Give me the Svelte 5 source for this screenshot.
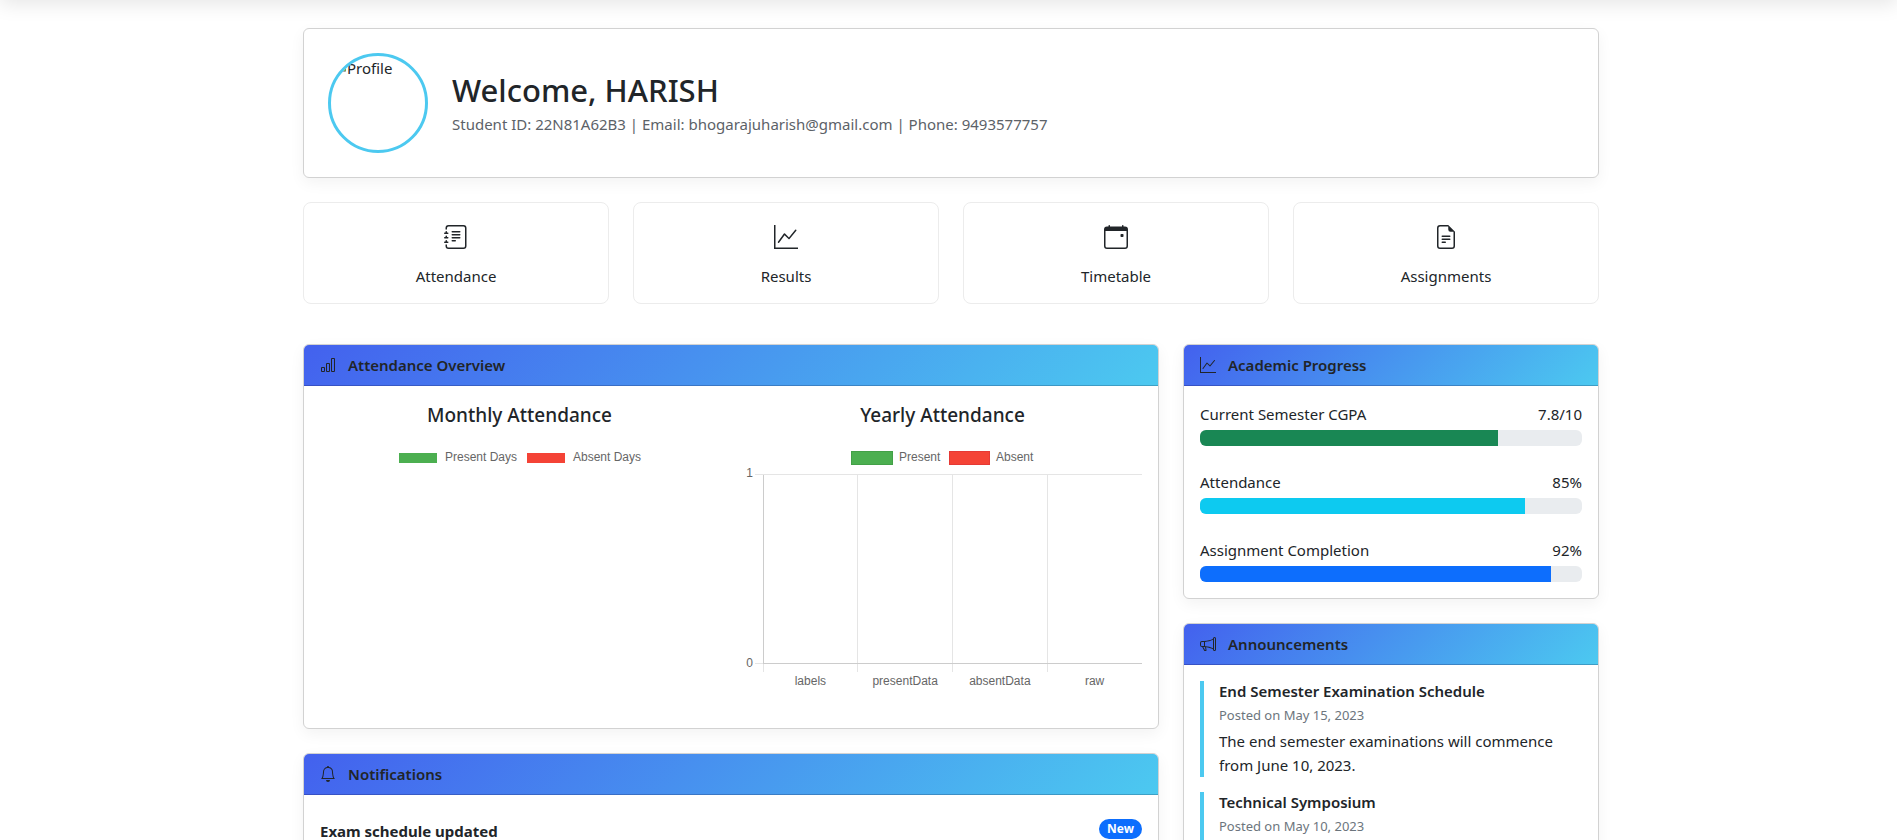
<script>
  const icons = {
    journal: [
      'M5 10.5a.5.5 0 0 1 .5-.5h2a.5.5 0 0 1 0 1h-2a.5.5 0 0 1-.5-.5m0-2a.5.5 0 0 1 .5-.5h5a.5.5 0 0 1 0 1h-5a.5.5 0 0 1-.5-.5m0-2a.5.5 0 0 1 .5-.5h5a.5.5 0 0 1 0 1h-5a.5.5 0 0 1-.5-.5m0-2a.5.5 0 0 1 .5-.5h5a.5.5 0 0 1 0 1h-5a.5.5 0 0 1-.5-.5',
      'M3 0h10a2 2 0 0 1 2 2v12a2 2 0 0 1-2 2H3a2 2 0 0 1-2-2v-1h1v1a1 1 0 0 0 1 1h10a1 1 0 0 0 1-1V2a1 1 0 0 0-1-1H3a1 1 0 0 0-1 1v1H1V2a2 2 0 0 1 2-2',
      'M1 5v-.5a.5.5 0 0 1 1 0V5h.5a.5.5 0 0 1 0 1h-2a.5.5 0 0 1 0-1zm0 3v-.5a.5.5 0 0 1 1 0V8h.5a.5.5 0 0 1 0 1h-2a.5.5 0 0 1 0-1zm0 3v-.5a.5.5 0 0 1 1 0v.5h.5a.5.5 0 0 1 0 1h-2a.5.5 0 0 1 0-1z'
    ],
    graph: [
      'M0 0h1v15h15v1H0zm14.817 3.113a.5.5 0 0 1 .07.704l-4.5 5.5a.5.5 0 0 1-.74.037L7.06 6.767l-3.656 5.027a.5.5 0 0 1-.808-.588l4-5.5a.5.5 0 0 1 .758-.06l2.609 2.61 4.15-5.073a.5.5 0 0 1 .704-.07'
    ],
    calendar: [
      'M11 6.5a.5.5 0 0 1 .5-.5h1a.5.5 0 0 1 .5.5v1a.5.5 0 0 1-.5.5h-1a.5.5 0 0 1-.5-.5z',
      'M3.5 0a.5.5 0 0 1 .5.5V1h8V.5a.5.5 0 0 1 1 0V1h1a2 2 0 0 1 2 2v11a2 2 0 0 1-2 2H2a2 2 0 0 1-2-2V3a2 2 0 0 1 2-2h1V.5a.5.5 0 0 1 .5-.5M1 4v10a1 1 0 0 0 1 1h12a1 1 0 0 0 1-1V4z'
    ],
    file: [
      'M5.5 7a.5.5 0 0 0 0 1h5a.5.5 0 0 0 0-1zM5 9.5a.5.5 0 0 1 .5-.5h5a.5.5 0 0 1 0 1h-5a.5.5 0 0 1-.5-.5m0 2a.5.5 0 0 1 .5-.5h2a.5.5 0 0 1 0 1h-2a.5.5 0 0 1-.5-.5',
      'M9.5 0H4a2 2 0 0 0-2 2v12a2 2 0 0 0 2 2h8a2 2 0 0 0 2-2V4.5zm0 1v2A1.5 1.5 0 0 0 11 4.5h2V14a1 1 0 0 1-1 1H4a1 1 0 0 1-1-1V2a1 1 0 0 1 1-1z'
    ],
    bars: [
      'M4 11H2v3h2zm5-4H7v7h2zm5-5v12h-2V2zm-2-1a1 1 0 0 0-1 1v12a1 1 0 0 0 1 1h2a1 1 0 0 0 1-1V2a1 1 0 0 0-1-1zM6 7a1 1 0 0 1 1-1h2a1 1 0 0 1 1 1v7a1 1 0 0 1-1 1H7a1 1 0 0 1-1-1zm-5 4a1 1 0 0 1 1-1h2a1 1 0 0 1 1 1v3a1 1 0 0 1-1 1H2a1 1 0 0 1-1-1z'
    ],
    bell: [
      'M8 16a2 2 0 0 0 2-2H6a2 2 0 0 0 2 2M8 1.918l-.797.161A4 4 0 0 0 4 6c0 .628-.134 2.197-.459 3.742-.16.767-.376 1.566-.663 2.258h10.244c-.287-.692-.502-1.49-.663-2.258C12.134 8.197 12 6.628 12 6a4 4 0 0 0-3.203-3.92zM14.22 12c.223.447.481.801.78 1H1c.299-.199.557-.553.78-1C2.68 10.2 3 6.88 3 6c0-2.42 1.72-4.44 4.005-4.901a1 1 0 1 1 1.99 0A5 5 0 0 1 13 6c0 .88.32 4.2 1.22 6'
    ],
    megaphone: [
      'M13 2.5a1.5 1.5 0 0 1 3 0v11a1.5 1.5 0 0 1-3 0v-.214c-2.162-1.241-4.49-1.843-6.912-2.083l.405 2.712A1 1 0 0 1 5.51 15.1h-.548a1 1 0 0 1-.916-.599l-1.85-3.49-.202-.003A2.014 2.014 0 0 1 0 9V7a2.02 2.02 0 0 1 1.992-2.013 75 75 0 0 0 2.483-.075c3.043-.154 6.148-.849 8.525-2.199zm1 0v11a.5.5 0 0 0 1 0v-11a.5.5 0 0 0-1 0m-1 1.35c-2.344 1.205-5.209 1.842-8 2.033v4.233q.27.015.537.036c2.568.189 5.093.744 7.463 1.993zm-9 6.215v-4.13a95 95 0 0 1-1.992.052A1.02 1.02 0 0 0 1 7v2c0 .55.448 1.002 1.006 1.009A61 61 0 0 1 4 10.065m-.657.975 1.609 3.037.01.024h.548l-.002-.014-.443-2.966a68 68 0 0 0-1.722-.082z'
    ]
  };

  const links = [
    { label: 'Attendance', icon: 'journal' },
    { label: 'Results', icon: 'graph' },
    { label: 'Timetable', icon: 'calendar' },
    { label: 'Assignments', icon: 'file' }
  ];

  const progress = [
    { label: 'Current Semester CGPA', value: '7.8/10', percent: 78, color: '#198754' },
    { label: 'Attendance', value: '85%', percent: 85, color: '#0dcaf0' },
    { label: 'Assignment Completion', value: '92%', percent: 92, color: '#0d6efd' }
  ];

  const announcements = [
    {
      title: 'End Semester Examination Schedule',
      date: 'Posted on May 15, 2023',
      text: 'The end semester examinations will commence from June 10, 2023.'
    },
    { title: 'Technical Symposium', date: 'Posted on May 10, 2023', text: '' }
  ];

  const categories = ['labels', 'presentData', 'absentData', 'raw'];
  const plot = { left: 20, right: 399, top: 41, bottom: 230 };
  const step = (plot.right - plot.left) / categories.length;
  const gridX = (i) => Math.floor(plot.left + step * i) + 0.5;
</script>

{#snippet icon(name, size)}
  <svg class="icon" width={size} height={size} viewBox="0 0 16 16" fill="currentColor" aria-hidden="true">
    {#each icons[name] as d}
      <path {d} />
    {/each}
  </svg>
{/snippet}

{#snippet heading(name, text)}
  <header class="card-header">
    {@render icon(name, 16)}
    <h2>{text}</h2>
  </header>
{/snippet}

<div class="nav-edge"></div>

<div class="page">
  <main>
    <section class="card profile">
      <div class="avatar">
        <svg width="16" height="16" viewBox="0 0 16 16" aria-hidden="true">
          <path d="M1.500 .500h9l4 4v11h-13z" fill="#fff" stroke="#9aa0a6" />
          <path d="M3 15l5-6 3 3 2-2 2 2v3z" fill="#6aa84f" />
        </svg><span>Profile</span>
      </div>
      <div>
        <h1>Welcome, HARISH</h1>
        <p>Student ID: 22N81A62B3 | Email: bhogarajuharish@gmail.com | Phone: 9493577757</p>
      </div>
    </section>

    <nav class="links">
      {#each links as link}
        <a href="#{link.label.toLowerCase()}">
          <span class="link-icon">{@render icon(link.icon, 24)}</span>
          {link.label}
        </a>
      {/each}
    </nav>

    <div class="columns">
      <div class="column">
        <section class="card">
          {@render heading('bars', 'Attendance Overview')}
          <div class="card-body charts">
            <div>
              <h3>Monthly Attendance</h3>
              <svg class="chart" viewBox="0 0 399 278">
                <rect x="79" y="19" width="38" height="10" fill="#4caf50" />
                <text x="125" y="27">Present Days</text>
                <rect x="207" y="19" width="38" height="10" fill="#f44336" />
                <text x="253" y="27">Absent Days</text>
              </svg>
            </div>
            <div>
              <h3>Yearly Attendance</h3>
              <svg class="chart" viewBox="0 0 399 278">
                <rect x="108.500" y="17.500" width="41" height="13" fill="#4caf50" stroke="#43a047" />
                <text x="156" y="27">Present</text>
                <rect x="206.500" y="17.500" width="40" height="13" fill="#f44336" stroke="#e53935" />
                <text x="253" y="27">Absent</text>
                <g stroke="#e5e5e5">
                  <path d="M12 {plot.top - 0.5}H{plot.right}M12 {plot.bottom - 0.5}H{plot.left}" />
                  {#each categories as _, i}
                    <path d="M{gridX(i)} {plot.top}V{plot.bottom + 8}" />
                  {/each}
                </g>
                <path
                  d="M{gridX(0)} {plot.top}V{plot.bottom}M{plot.left} {plot.bottom - 0.5}H{plot.right}"
                  stroke="#cccccc"
                  fill="none"
                />
                <text x="10" y="43" text-anchor="end">1</text>
                <text x="10" y="233" text-anchor="end">0</text>
                {#each categories as category, i}
                  <text x={plot.left + step * (i + 0.5)} y="251" text-anchor="middle">{category}</text>
                {/each}
              </svg>
            </div>
          </div>
        </section>

        <section class="card">
          {@render heading('bell', 'Notifications')}
          <div class="card-body">
            <div class="notice">
              <strong>Exam schedule updated</strong>
              <span class="badge">New</span>
            </div>
          </div>
        </section>
      </div>

      <div class="column">
        <section class="card">
          {@render heading('graph', 'Academic Progress')}
          <div class="card-body meters">
            {#each progress as item}
              <div>
                <div class="meter-label"><span>{item.label}</span><span>{item.value}</span></div>
                <div class="track" role="progressbar" aria-label={item.label} aria-valuenow={item.percent}>
                  <div class="fill" style="width: {item.percent}%; background: {item.color}"></div>
                </div>
              </div>
            {/each}
          </div>
        </section>

        <section class="card">
          {@render heading('megaphone', 'Announcements')}
          <div class="card-body announcements">
            {#each announcements as item}
              <article>
                <h4>{item.title}</h4>
                <small>{item.date}</small>
                {#if item.text}<p>{item.text}</p>{/if}
              </article>
            {/each}
          </div>
        </section>
      </div>
    </div>
  </main>
</div>

<style>
  :global(body) {
    background: #fff;
    color: #212529;
    font-family: 'Segoe UI', 'Noto Sans', sans-serif;
    font-size: 15px;
    line-height: 24px;
  }

  * {
    box-sizing: border-box;
  }

  h1, h2, h3, h4, p {
    margin: 0;
  }

  .icon {
    display: block;
    flex: none;
  }

  .nav-edge {
    height: 60px;
    margin-top: -60px;
    box-shadow: 0 4px 20px rgba(0, 0, 0, 0.1);
  }

  .page {
    padding: 28px 0 0 5px;
  }

  main {
    max-width: 1296px;
    margin: 0 auto;
  }

  .card {
    border: 1px solid #d2d2d2;
    border-radius: 6px;
    background: #fff;
    box-shadow: 0 5px 15px rgba(0, 0, 0, 0.05);
  }

  .profile {
    display: flex;
    align-items: center;
    gap: 24px;
    padding: 24px;
  }

  .avatar {
    display: flex;
    align-items: flex-start;
    flex: none;
    width: 100px;
    height: 100px;
    border: 3px solid #4cc9f0;
    border-radius: 50%;
    overflow: hidden;
  }

  .avatar svg {
    flex: none;
  }

  h1 {
    margin-bottom: 2px;
    font-size: 31px;
    font-weight: 500;
    line-height: 40px;
  }

  .profile p {
    color: #5c6268;
  }

  .links {
    display: grid;
    grid-template-columns: repeat(4, 1fr);
    gap: 24px;
    margin: 24px 0 40px;
  }

  .links a {
    display: flex;
    flex-direction: column;
    align-items: center;
    gap: 9px;
    padding: 16px 16px 15px;
    border: 1px solid #ececec;
    border-radius: 8px;
    background: #fff;
    color: inherit;
    text-decoration: none;
  }

  .link-icon {
    display: flex;
    align-items: center;
    height: 36px;
  }

  .columns {
    display: grid;
    grid-template-columns: 856fr 416fr;
    gap: 24px;
    align-items: start;
  }

  .column {
    display: grid;
    gap: 24px;
  }

  .card-header {
    display: flex;
    align-items: center;
    gap: 12px;
    padding: 8px 16px;
    border-bottom: 1px solid rgba(0, 0, 0, 0.175);
    border-radius: 5px 5px 0 0;
    background: linear-gradient(135deg, #4361ee, #4cc9f0);
  }

  h2 {
    font-size: 15px;
    font-weight: 600;
    line-height: 24px;
  }

  .card-body {
    padding: 16px;
  }

  .charts {
    display: grid;
    grid-template-columns: 1fr 1fr;
    gap: 24px;
  }

  h3 {
    margin-bottom: 6px;
    font-size: 19px;
    font-weight: 500;
    line-height: 26px;
    text-align: center;
  }

  .chart {
    display: block;
    width: 100%;
  }

  .chart text {
    fill: #666;
    font-family: 'Liberation Sans', Arial, sans-serif;
    font-size: 12px;
  }

  .notice {
    display: flex;
    justify-content: space-between;
    align-items: flex-start;
    padding: 8px 0;
  }

  .badge {
    padding: 4px 8px;
    border-radius: 10px;
    background: #0d6efd;
    color: #fff;
    font-size: 12px;
    font-weight: 700;
    line-height: 12px;
  }

  .meters {
    display: grid;
    gap: 24px;
  }

  .meter-label {
    display: flex;
    justify-content: space-between;
    margin-bottom: 4px;
  }

  .track {
    height: 16px;
    border-radius: 6px;
    background: #e9ecef;
    overflow: hidden;
  }

  .fill {
    height: 100%;
  }

  .announcements {
    display: grid;
    gap: 15px;
  }

  article {
    padding-left: 15px;
    border-left: 4px solid #4cc9f0;
  }

  h4 {
    margin-bottom: 2px;
    font-size: 15px;
    font-weight: 600;
    line-height: 21px;
  }

  small {
    display: block;
    margin-bottom: 2px;
    color: #6c757d;
    font-size: 13px;
    line-height: 23px;
  }
</style>
